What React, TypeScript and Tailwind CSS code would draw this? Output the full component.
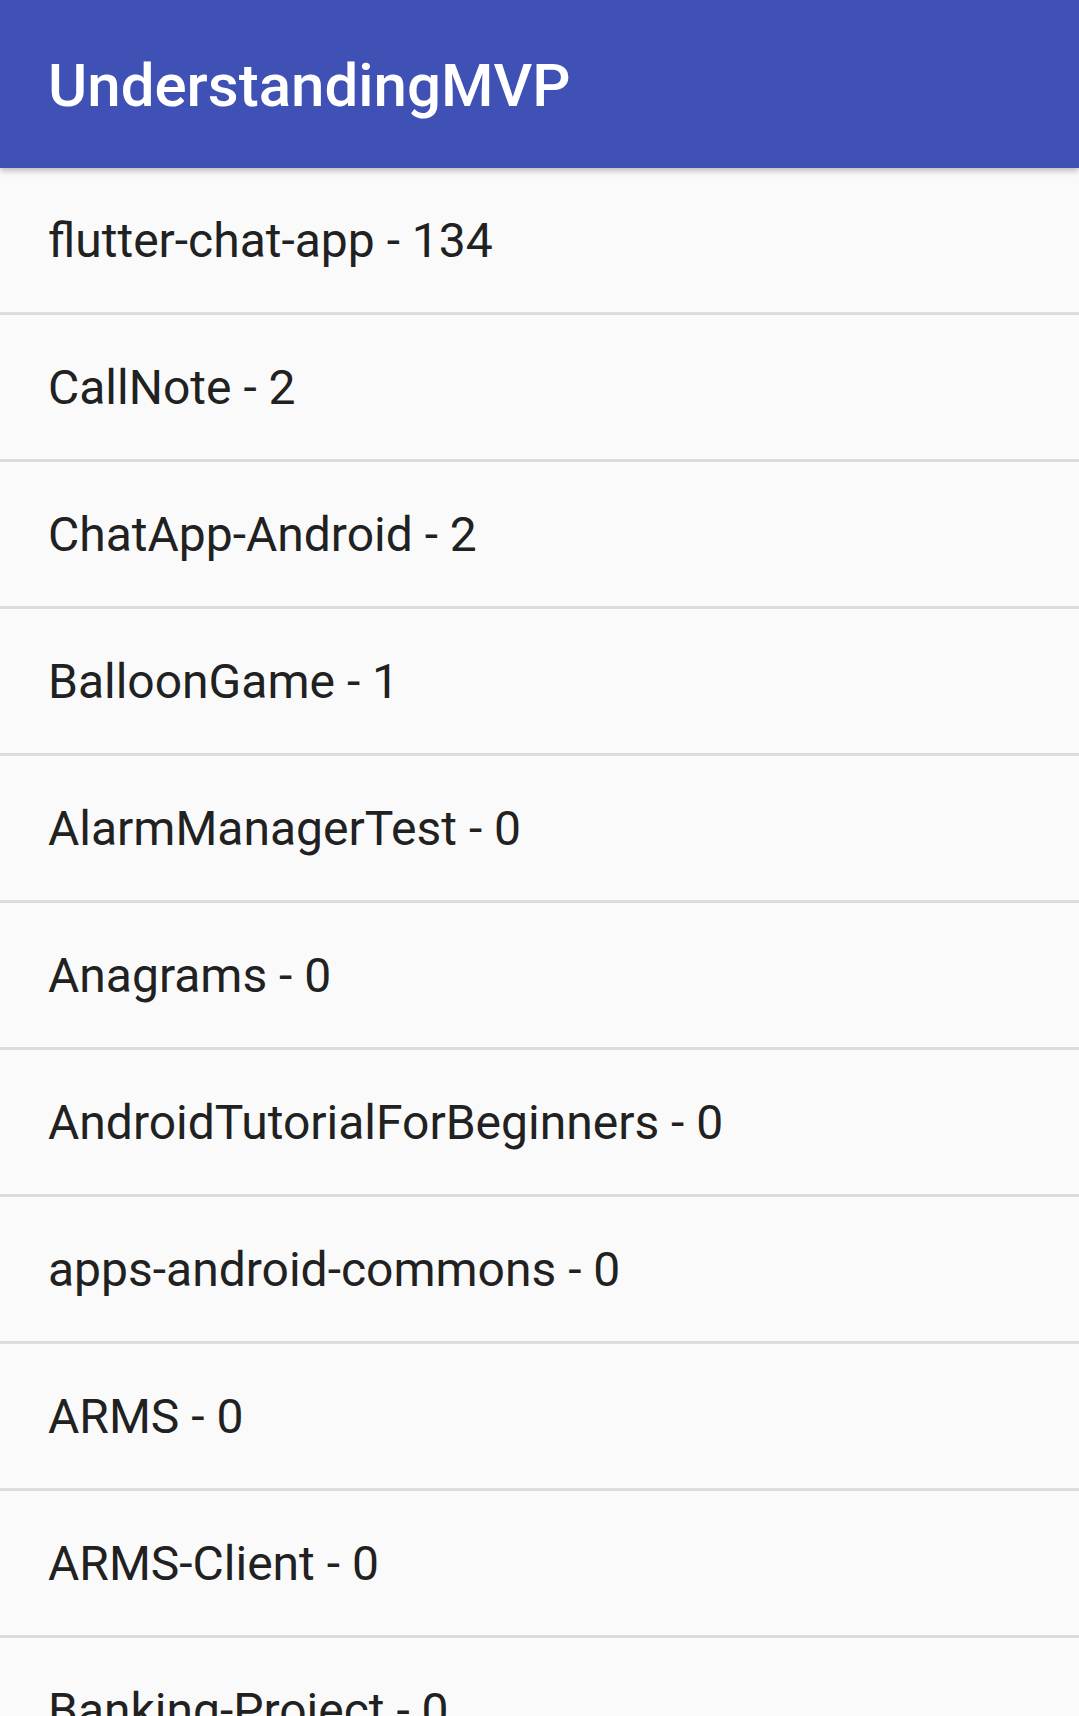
import React from 'react';

const repos = [
  { name: 'flutter-chat-app', stars: 134 },
  { name: 'CallNote', stars: 2 },
  { name: 'ChatApp-Android', stars: 2 },
  { name: 'BalloonGame', stars: 1 },
  { name: 'AlarmManagerTest', stars: 0 },
  { name: 'Anagrams', stars: 0 },
  { name: 'AndroidTutorialForBeginners', stars: 0 },
  { name: 'apps-android-commons', stars: 0 },
  { name: 'ARMS', stars: 0 },
  { name: 'ARMS-Client', stars: 0 },
  { name: 'Banking-Project', stars: 0 },
];

const App = () => {
  return (
    <div
      className="w-[1079px] h-[1716px] overflow-hidden bg-[#fafafa]"
      style={{ fontFamily: 'Roboto, "Noto Sans", sans-serif' }}
    >
      <header className="relative z-10 h-[168px] bg-[#3f51b5] flex items-center pl-[48px] pt-[4px] shadow-[0_3px_6px_rgba(0,0,0,0.25)]">
        <h1 className="text-white text-[60px] font-medium leading-none">UnderstandingMVP</h1>
      </header>

      <ul>
        {repos.map((repo, index) => (
          <li key={index} className="border-b-[3px] border-[#dcdcdc]">
            <div className="h-[144px] flex items-center pl-[48px] pt-[2px] text-[48px] text-[#212121] leading-none">
              {repo.name} - {repo.stars}
            </div>
          </li>
        ))}
      </ul>
    </div>
  );
};

export default App;
